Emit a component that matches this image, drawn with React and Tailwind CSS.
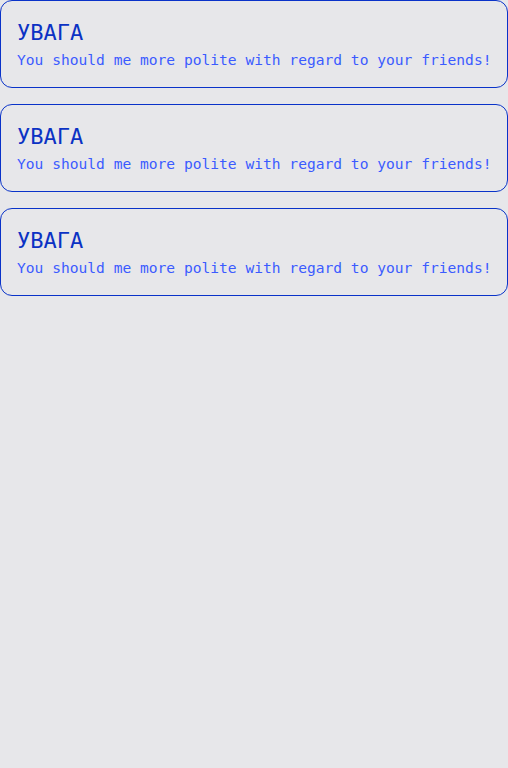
export default function App() {
  const items = [0, 1, 2];
  return (
    <div className="min-h-[768px] w-[508px] bg-[#e7e7ea] flex flex-col gap-4" style={{ fontFamily: '"DejaVu Sans Mono", monospace' }}>
      {items.map((i) => (
        <div key={i} className="h-[88px] rounded-xl border border-[#0a33c9] px-4 pt-[16px]">
          <div className="text-[22px] leading-[32px] text-[#0b32c4]">УВАГА</div>
          <div className="text-[14.6px] leading-[22px] text-[#3b5bff] whitespace-nowrap">You should me more polite with regard to your friends!</div>
        </div>
      ))}
    </div>
  );
}
